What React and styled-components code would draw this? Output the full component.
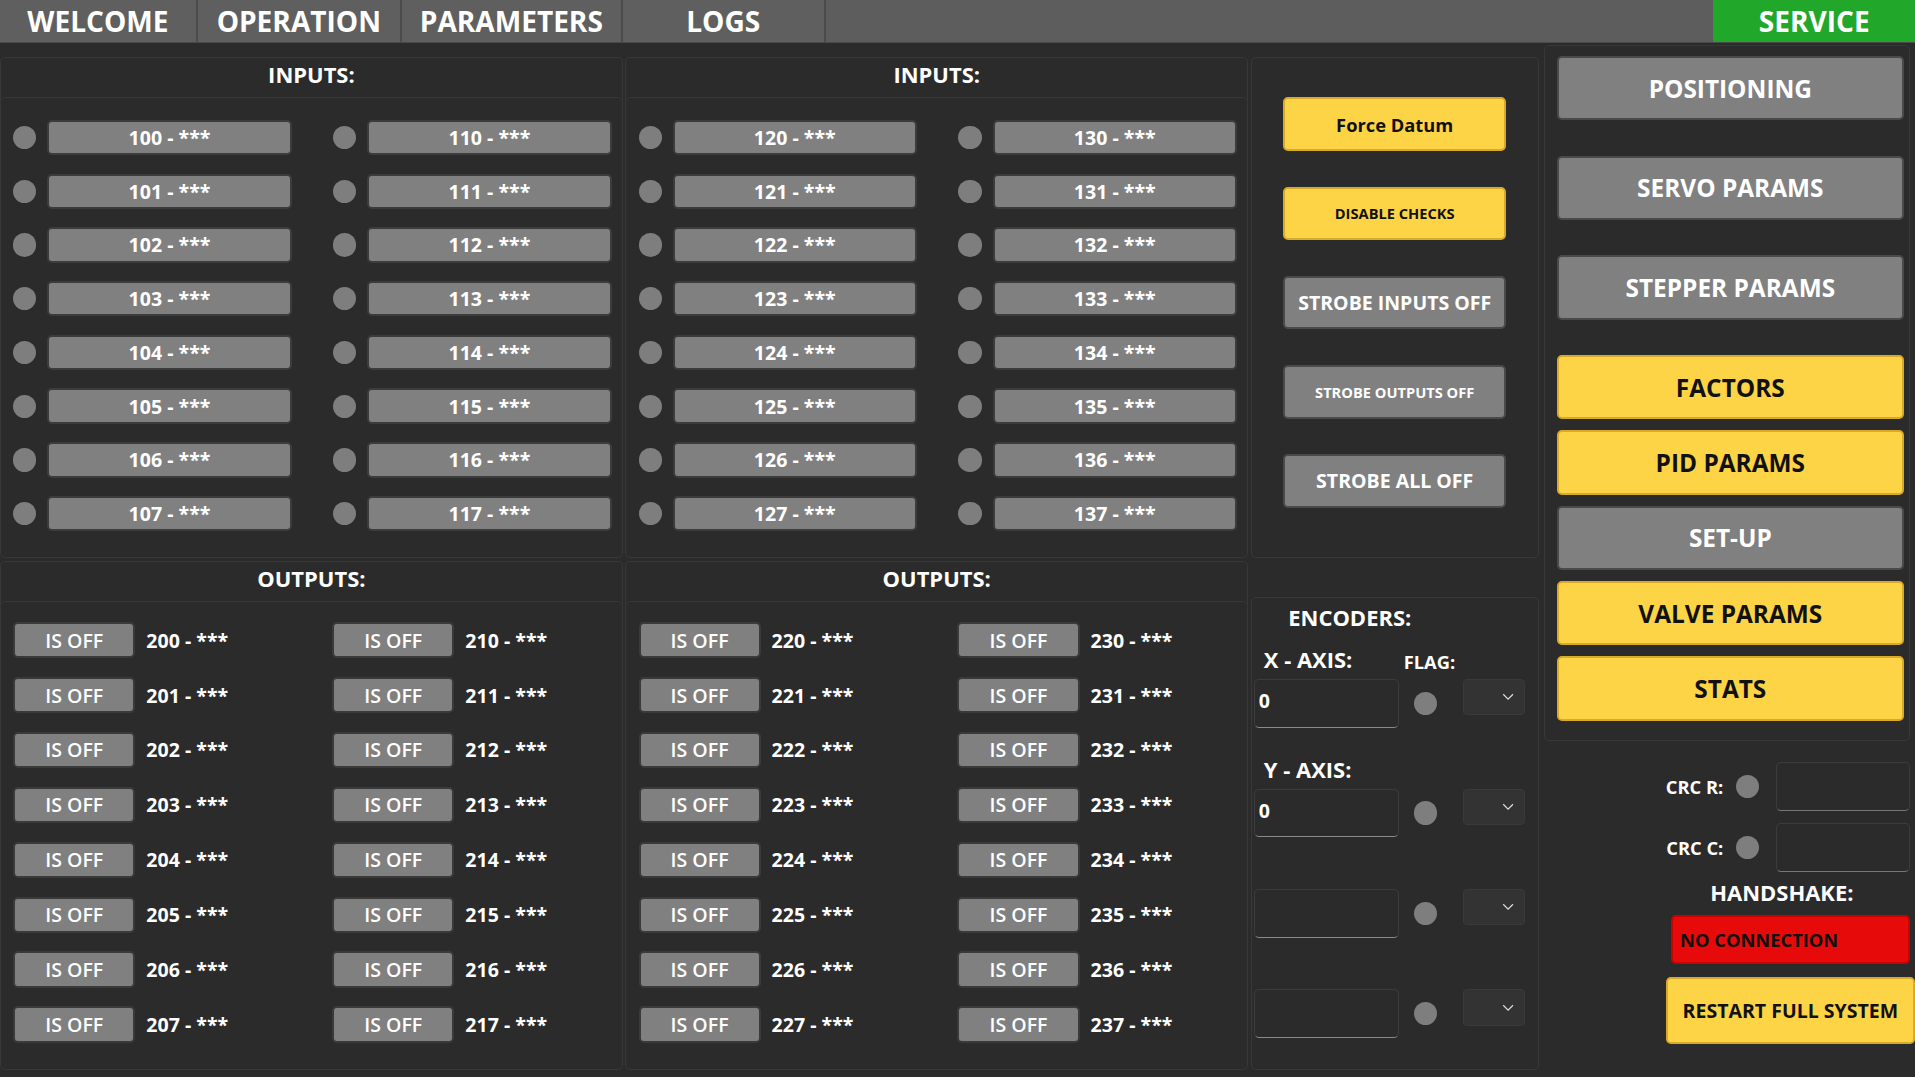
import React from 'react'
import styled, { createGlobalStyle } from 'styled-components'

const Global = createGlobalStyle`
  html, body { margin: 0; background: #2b2b2b; overflow: hidden; }
  * { box-sizing: border-box; }
`;

const Screen = styled.div`
  zoom: 1.2213;
  width: 1568px;
  height: 882px;
  background: #2b2b2b;
  color: #fff;
  font-family: "Open Sans", "Noto Sans", sans-serif;
  font-weight: 700;
  display: flex;
  flex-direction: column;
`;
const TopBar = styled.div`
  height: 35px;
  display: flex;
  background: #5d5d5d;
  border-bottom: 1px solid #4a4a4a;
`;
const Tab = styled.div`
  width: ${p => p.w}px;
  display: flex;
  align-items: center;
  justify-content: center;
  font-size: 23px;
  border-right: 2px solid #4b4b4b;
  background: ${p => p.green ? '#21a82a' : '#5f5f5f'};
  ${p => p.green && 'margin-left: auto; border: none;'}
`;
const Body = styled.div`
  flex: 1;
  display: grid;
  grid-template-columns: 510px 510px 236px 1fr;
  grid-template-rows: 410px 1fr;
  gap: 2px;
  padding: 12px 0 6px 0;
`;
const Panel = styled.div`
  border: 1px solid #383838;
  border-radius: 4px;
  display: flex;
  flex-direction: column;
  grid-column: ${p => p.col};
  grid-row: ${p => p.row};
`;
const Title = styled.div`
  text-align: center;
  font-size: 18px;
  height: 32px;
  line-height: 28px;
`;
const Inner = styled.div`
  flex: 1;
  border-top: 1px solid #383838;
  border-radius: 4px;
  display: grid;
  grid-template-columns: 1fr 1fr;
  grid-auto-flow: column;
  grid-template-rows: repeat(8, ${p => p.rh}px);
  padding: ${p => p.pt}px 10px 0 10px;
  column-gap: 34px;
`;
const Row = styled.div`
  display: flex;
  align-items: center;
  gap: 9px;
  white-space: nowrap;
`;
const Dot = styled.span`
  width: 19px;
  height: 19px;
  border-radius: 50%;
  background: #7e7e7e;
  flex: none;
`;
const Label = styled.div`
  width: 200px;
  height: 29px;
  background: #808080;
  border: 2px solid #3c3c3c;
  border-radius: 4px;
  display: flex;
  align-items: center;
  justify-content: center;
  font-size: 16px;
`;
const OffBtn = styled.div`
  width: 100px;
  height: 30px;
  background: #808080;
  border: 2px solid #3a3a3a;
  border-radius: 4px;
  display: flex;
  align-items: center;
  justify-content: center;
  font-size: 16px;
  font-weight: 600;
`;
const OutText = styled.span`
  font-size: 16px;
`;
const Stack = styled.div`
  display: flex;
  flex-direction: column;
  align-items: center;
  gap: ${p => p.gap}px;
  padding-top: ${p => p.pt}px;
`;
const Btn = styled.div`
  width: ${p => p.w || 183}px;
  height: ${p => p.h || 44}px;
  background: ${p => p.yellow ? '#fed447' : p.red ? '#e60a0a' : '#808080'};
  color: ${p => p.yellow || p.red ? '#111' : '#fff'};
  border: 2px solid ${p => p.yellow ? '#d9a92a' : p.red ? '#c00' : '#4a4a4a'};
  border-radius: 4px;
  display: flex;
  align-items: center;
  justify-content: ${p => p.left ? 'flex-start' : 'center'};
  padding-left: ${p => p.left ? 6 : 0}px;
  font-size: ${p => p.fs || 16}px;
  margin-top: ${p => p.mt || 0}px;
`;
const Side = styled.div`
  grid-column: 4;
  grid-row: 1 / 3;
  display: flex;
  flex-direction: column;
  padding: 0 4px 0 2px;
`;
const SidePanel = styled(Panel)`
  padding: 8px 2px 16px 10px;
  gap: 9px;
  height: 570px;
  margin-top: -10px;
`;
const Enc = styled(Panel)`
  margin-top: 30px;
  padding: 4px 0 0 2px;
`;
const EncTitle = styled.div`
  font-size: 18px;
  padding-left: 28px;
  height: 30px;
`;
const Axis = styled.div`
  display: flex;
  align-items: flex-end;
  font-size: 18px;
  height: 28px;
  padding-left: 8px;
  gap: 42px;
  margin-top: ${p => p.mt || 0}px;
  & > small { font-size: 15px; }
`;
const EncRow = styled.div`
  display: flex;
  align-items: center;
  height: 48px;
  margin-top: ${p => p.mt || 0}px;
`;
const Field = styled.div`
  width: 119px;
  height: 40px;
  border: 1px solid #3c3c3c;
  border-bottom: 1px solid #8a8a8a;
  border-radius: 4px;
  padding: 6px 3px;
  font-size: 16px;
`;
const FlagDot = styled(Dot)`
  margin-left: 12px;
`;
const Select = styled.div`
  width: 51px;
  height: 30px;
  margin-left: 21px;
  margin-top: -10px;
  background: #333;
  border: 1px solid #3a3a3a;
  border-radius: 3px;
  display: flex;
  justify-content: flex-end;
  align-items: center;
  padding-right: 8px;
`;
const CrcRow = styled.div`
  display: flex;
  align-items: center;
  justify-content: flex-end;
  gap: 10px;
  height: 50px;
  font-size: 15px;
`;
const CrcBox = styled.div`
  width: 110px;
  height: 40px;
  border: 1px solid #3c3c3c;
  border-bottom-color: #777;
  border-radius: 4px;
  margin-left: 4px;
`;
const Handshake = styled.div`
  text-align: center;
  font-size: 18px;
  padding-left: 90px;
  height: 30px;
`;
const RightRow = styled.div`
  display: flex;
  justify-content: flex-end;
  margin-top: ${p => p.mt || 0}px;
  margin-right: ${p => p.mr || 0}px;
`;

const Chevron = () => (
  <svg width="10" height="6" viewBox="0 0 10 6"><path d="M1 1l4 4 4-4" stroke="#ddd" fill="none" strokeWidth="1" /></svg>
)

const Inputs = ({ start, col }) => (
  <Panel col={col} row={1}>
    <Title>INPUTS:</Title>
    <Inner rh={44} pt={10}>
      {[0, 10].flatMap(o => Array.from({ length: 8 }, (_, i) => (
        <Row key={o + i}><Dot /><Label>{start + o + i} - ***</Label></Row>
      )))}
    </Inner>
  </Panel>
)

const Outputs = ({ start, col }) => (
  <Panel col={col} row={2}>
    <Title>OUTPUTS:</Title>
    <Inner rh={45} pt={9}>
      {[0, 10].flatMap(o => Array.from({ length: 8 }, (_, i) => (
        <Row key={o + i}><OffBtn>IS OFF</OffBtn><OutText>{start + o + i} - ***</OutText></Row>
      )))}
    </Inner>
  </Panel>
)

const EncLine = ({ value, mt }) => (
  <EncRow mt={mt}><Field>{value}</Field><FlagDot /><Select><Chevron /></Select></EncRow>
)

export default function App() {
  return (
    <Screen>
      <Global />
      <TopBar>
        <Tab w={162}>WELCOME</Tab>
        <Tab w={167}>OPERATION</Tab>
        <Tab w={181}>PARAMETERS</Tab>
        <Tab w={166}>LOGS</Tab>
        <Tab w={165} green>SERVICE</Tab>
      </TopBar>
      <Body>
        <Inputs start={100} col={1} />
        <Inputs start={120} col={2} />
        <Panel col={3} row={1}>
          <Stack gap={29} pt={32}>
            <Btn yellow fs={15}>Force Datum</Btn>
            <Btn yellow fs={12}>DISABLE CHECKS</Btn>
            <Btn>STROBE INPUTS OFF</Btn>
            <Btn fs={12}>STROBE OUTPUTS OFF</Btn>
            <Btn>STROBE ALL OFF</Btn>
          </Stack>
        </Panel>
        <Side>
          <SidePanel>
            <Btn w={284} h={54} fs={20}>POSITIONING</Btn>
            <Btn w={284} h={54} fs={20} mt={20}>SERVO PARAMS</Btn>
            <Btn w={284} h={54} fs={20} mt={20}>STEPPER PARAMS</Btn>
            <Btn w={284} h={54} fs={20} yellow mt={20}>FACTORS</Btn>
            <Btn w={284} h={54} fs={20} yellow>PID PARAMS</Btn>
            <Btn w={284} h={54} fs={20}>SET-UP</Btn>
            <Btn w={284} h={54} fs={20} yellow>VALVE PARAMS</Btn>
            <Btn w={284} h={54} fs={20} yellow>STATS</Btn>
          </SidePanel>
          <Stack gap={0} pt={12} style={{ alignItems: 'stretch' }}>
            <CrcRow>CRC R:<Dot /><CrcBox /></CrcRow>
            <CrcRow>CRC C:<Dot /><CrcBox /></CrcRow>
            <Handshake>HANDSHAKE:</Handshake>
            <RightRow><Btn red left w={196} h={40} fs={15}>NO CONNECTION</Btn></RightRow>
            <RightRow mt={11} mr={-4}><Btn yellow w={204} h={55} fs={16}>RESTART FULL SYSTEM</Btn></RightRow>
          </Stack>
        </Side>
        <Outputs start={200} col={1} />
        <Outputs start={220} col={2} />
        <Enc col={3} row={2}>
          <EncTitle>ENCODERS:</EncTitle>
          <Axis>X - AXIS:<small>FLAG:</small></Axis>
          <EncLine value="0" />
          <Axis mt={14}>Y - AXIS:</Axis>
          <EncLine value="0" />
          <EncLine mt={34} />
          <EncLine mt={34} />
        </Enc>
      </Body>
    </Screen>
  )
}
